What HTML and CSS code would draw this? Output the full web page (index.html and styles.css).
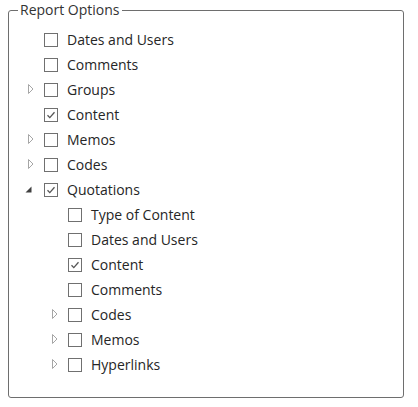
FILE: index.html
```html
<!DOCTYPE html>
<html lang="en">
<head>
  <meta charset="UTF-8" />
  <title>Report Options</title>
  <link rel="stylesheet" href="styles.css">
</head>
<body>
  <fieldset class="options">
    <legend>Report Options</legend>
    <ul class="tree" id="tree"></ul>
  </fieldset>

  <script>
    const items = [
      { label: "Dates and Users", level: 0 },
      { label: "Comments", level: 0 },
      { label: "Groups", level: 0, expander: "closed" },
      { label: "Content", level: 0, checked: true },
      { label: "Memos", level: 0, expander: "closed" },
      { label: "Codes", level: 0, expander: "closed" },
      { label: "Quotations", level: 0, checked: true, expander: "open" },
      { label: "Type of Content", level: 1 },
      { label: "Dates and Users", level: 1 },
      { label: "Content", level: 1, checked: true },
      { label: "Comments", level: 1 },
      { label: "Codes", level: 1, expander: "closed" },
      { label: "Memos", level: 1, expander: "closed" },
      { label: "Hyperlinks", level: 1, expander: "closed" }
    ];

    const closedIcon = '<svg width="7" height="11" viewBox="0 0 7 11"><path d="M1.5 0.5 L6 5 L1.5 9.5 Z" fill="none" stroke="#a6a6a6" stroke-width="1"/></svg>';
    const openIcon = '<svg width="7" height="11" viewBox="0 0 7 11"><path d="M0.5 8.5 L6.5 8.5 L6.5 2.5 Z" fill="#404040"/></svg>';
    const checkIcon = '<svg width="12" height="12" viewBox="0 0 12 12"><path d="M2.5 6.2 L4.8 8.6 L9.5 3.2" fill="none" stroke="#555" stroke-width="1.3"/></svg>';

    const tree = document.getElementById("tree");
    items.forEach(item => {
      const li = document.createElement("li");
      li.className = "row level-" + item.level;
      let icon = "";
      if (item.expander === "closed") icon = closedIcon;
      if (item.expander === "open") icon = openIcon;
      li.innerHTML = `
        <span class="expander ${item.expander || ''}">${icon}</span>
        <span class="box">${item.checked ? checkIcon : ''}</span>
        <span class="label">${item.label}</span>
      `;
      tree.appendChild(li);
    });
  </script>
</body>
</html>
```

FILE: styles.css
```css
body {
  margin: 0;
  background: #ffffff;
  font-family: "Open Sans", "Noto Sans", sans-serif;
  font-size: 14px;
  color: #262626;
}
.options {
  margin: 0 0 0 8px;
  width: 396px;
  height: 398px;
  box-sizing: border-box;
  padding: 0;
  border: 1px solid #6e6e6e;
  border-radius: 3px;
}
.options legend {
  margin-left: 9px;
  padding: 0 2px;
  line-height: 20px;
  color: #333;
}
.tree {
  list-style: none;
  margin: 0;
  padding: 7px 0 0 0;
}
.row {
  display: flex;
  align-items: center;
  height: 25px;
}
.level-0 {
  padding-left: 17px;
}
.level-1 {
  padding-left: 41px;
}
.expander {
  width: 12px;
  height: 14px;
  display: flex;
  align-items: center;
  justify-content: flex-start;
}
.expander.closed {
  padding-left: 1px;
  width: 11px;
}
.expander.open {
  margin-left: -1px;
  width: 13px;
}
.expander svg {
  display: block;
}
.box {
  width: 14px;
  height: 14px;
  margin-left: 6px;
  box-sizing: border-box;
  border: 1px solid #707070;
  background: #fff;
  display: flex;
  align-items: center;
  justify-content: center;
}
.box svg {
  display: block;
}
.label {
  margin-left: 9px;
  white-space: nowrap;
}
```
